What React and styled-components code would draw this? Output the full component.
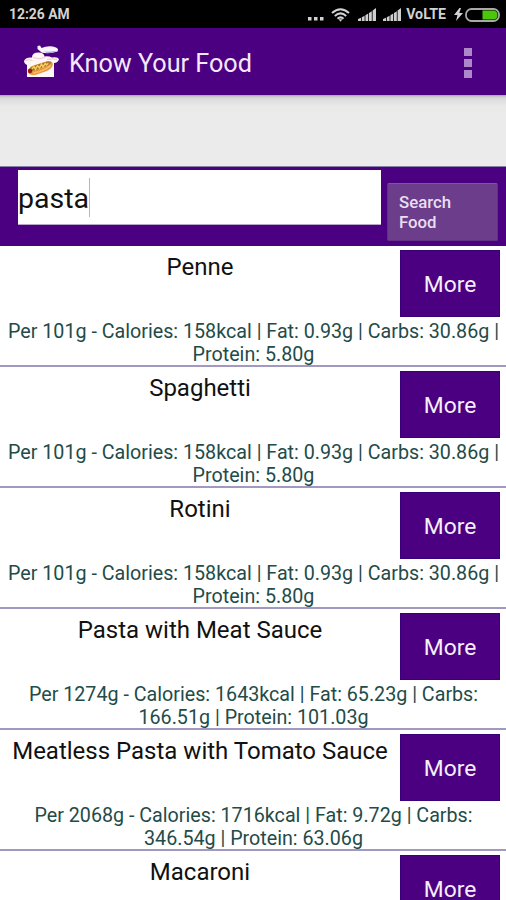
import styled, {createGlobalStyle} from "styled-components";

const GlobalStyle = createGlobalStyle`
	* {
		box-sizing: border-box;
	}

	body {
		margin: 0;
		background: #fff;
		font-family: Roboto, "Liberation Sans", sans-serif;
	}
`;

const Screen = styled.div`
	width: 506px;
	height: 900px;
	overflow: hidden;
	display: flex;
	flex-direction: column;
	background: #fff;
`;

const StatusBar = styled.div`
	flex: none;
	height: 28px;
	padding: 1px 6px 0 9px;
	display: flex;
	align-items: center;
	justify-content: space-between;
	background: #000;
	color: #d2d2d2;
`;

const StatusText = styled.span`
	margin-top: -1px;
	margin-left: ${({$gap = 0}) => $gap}px;
	font-size: ${({$size}) => $size}px;
	font-weight: 700;
	line-height: 16px;
	white-space: nowrap;
`;

const StatusIcons = styled.div`
	display: flex;
	align-items: center;
`;

const StatusIcon = styled.svg`
	display: block;
	flex: none;
	margin-left: ${({$gap = 0}) => $gap}px;
`;

const AppBar = styled.header`
	flex: none;
	height: 67px;
	padding: 0 34px 0 23px;
	display: flex;
	align-items: center;
	background: #4b0082;
`;

const AppTitle = styled.h1`
	margin: 4px auto 0 9px;
	font-size: 25.2px;
	font-weight: 400;
	line-height: 32px;
	color: #f3e9fa;
`;

const MenuButton = styled.button`
	padding: 2px 0 0;
	border: 0;
	background: none;
	display: grid;
	gap: 3px;
`;

const MenuDot = styled.span`
	width: 8px;
	height: 8px;
	background: #ad87ca;
`;

const Spacer = styled.div`
	flex: none;
	height: 72px;
	border-bottom: 1px solid #8a80a5;
	background: linear-gradient(#a9a2b0 0, #cfcfcf 2px, #dedede 5px, #e9e9e9 11px, #ebebeb 18px);
`;

const SearchBar = styled.form`
	flex: none;
	height: 79px;
	padding: 3px 8px 5px 18px;
	display: flex;
	justify-content: space-between;
	background: #4b0082;
`;

const SearchField = styled.div`
	width: 363px;
	height: 55px;
	padding-top: 3px;
	border-bottom: 1px solid #b9a6c9;
	display: flex;
	align-items: center;
	background: #fff;
	font-size: 28.5px;
	line-height: 34px;
	color: #111;
`;

const Caret = styled.span`
	width: 1px;
	height: 39px;
	margin-top: -3px;
	background: #b8b8b8;
`;

const SearchButton = styled.button`
	width: 111px;
	height: 58px;
	margin-top: 13px;
	padding: 0 11px;
	border: 1px solid #633184;
	border-top-color: #7f55a0;
	border-radius: 2px;
	background: #6b3d8b;
	color: #eadff1;
	font-family: inherit;
	font-size: 16.8px;
	font-weight: 500;
	line-height: 20px;
	text-align: left;
`;

const FoodList = styled.ul`
	margin: 0;
	padding: 0;
	list-style: none;
`;

const FoodItem = styled.li`
	height: 121px;
	padding-top: 4px;
	border-bottom: 2px solid #a199bf;
`;

const FoodHeader = styled.div`
	height: 67px;
	padding-right: 6px;
	display: flex;
`;

const FoodName = styled.div`
	flex: 1;
	padding-top: 3px;
	font-size: 24px;
	line-height: 28px;
	text-align: center;
	white-space: nowrap;
	color: #111;
`;

const MoreButton = styled.button`
	width: 100px;
	height: 67px;
	padding: 1px 0 0;
	border: 1px solid #3a0079;
	background: #4b0082;
	color: #f6effa;
	font-family: inherit;
	font-size: 22.8px;
`;

const FoodDetails = styled.div`
	padding: 3px 0 0 1px;
	font-size: 19.7px;
	line-height: 23px;
	text-align: center;
	white-space: pre-line;
	color: #234b48;
`;

const foods = [
	{name: "Penne", details: "Per 101g - Calories: 158kcal | Fat: 0.93g | Carbs: 30.86g |\nProtein: 5.80g"},
	{name: "Spaghetti", details: "Per 101g - Calories: 158kcal | Fat: 0.93g | Carbs: 30.86g |\nProtein: 5.80g"},
	{name: "Rotini", details: "Per 101g - Calories: 158kcal | Fat: 0.93g | Carbs: 30.86g |\nProtein: 5.80g"},
	{name: "Pasta with Meat Sauce", details: "Per 1274g - Calories: 1643kcal | Fat: 65.23g | Carbs:\n166.51g | Protein: 101.03g"},
	{name: "Meatless Pasta with Tomato Sauce", details: "Per 2068g - Calories: 1716kcal | Fat: 9.72g | Carbs:\n346.54g | Protein: 63.06g"},
	{name: "Macaroni", details: ""},
];

const Signal = ({gap}) => (
	<StatusIcon $gap={gap} width="18" height="13" viewBox="0 0 18 13" fill="#cfcfcf">
		<path d="M0 13v-2l3-1.300V13zM3.800 13V9.300L6.600 7.800V13zM7.400 13V7.300L10.200 5.600V13zM11 13V5L13.800 3.200V13zM14.600 13V2.500L18 0v13z" />
	</StatusIcon>
);

const Wifi = () => (
	<StatusIcon $gap={7} width="19" height="14" viewBox="0 0 19 14" fill="none" stroke="#d2d2d2" strokeWidth="2">
		<path d="M1 5Q9.5-2.6 18 5M3.8 8Q9.5 2.8 15.2 8M6.5 10.7Q9.5 8 12.5 10.7" />
		<path d="M7.6 11.3h3.8L9.5 13.7z" fill="#d2d2d2" stroke="none" />
	</StatusIcon>
);

const Battery = () => (
	<StatusIcon $gap={2} width="35" height="14" viewBox="0 0 35 14">
		<rect x="1" y="1" width="33" height="12" rx="5.5" fill="#000" stroke="#a9a9a9" strokeWidth="1.8" />
		<path d="M17.5 2.400H28q4.500 0 4.500 4.600t-4.500 4.600H17.5z" fill="#4bc60b" />
	</StatusIcon>
);

const FoodLogo = () => (
	<svg width="37" height="34" viewBox="0 0 37 34">
		<path d="M14.500 1l2.500-.500 1.500 2.500Q26 0 33 2.500q3 1.500 1.500 4-7 2.500-15.500 1.200L14.500 4z" fill="#f8f5fd" />
		<path d="M21 6.500q7 1 13-.700-3 2-7 2-4 0-6-1.300z" fill="#8c83c1" />
		<path d="M4 32V20q-3.500-2-2.800-4.500Q3 12 9 12.500 9 7.500 15.500 7.500q5.500 0 6 4 4-.800 7.500 1 6-.800 7 1.500-1 4-5 4V32z" fill="#fff7f6" />
		<path d="M2 15.500q4-1.500 7.500 0M10 12.500q6 2.500 12 0M24 14.500q5-1.500 10 0" fill="none" stroke="#f0c5cb" strokeWidth="1" />
		<path d="M5 26q0-3.500 7-6L24.500 16q5-.500 5.300 3 .2 4.200-6 7L13 29.700Q5 31 5 26z" fill="#e8943e" />
		<path d="M6 24.500q2-3 8-4.700l10-3q4-.500 4.200 1-1 2.200-6.500 3.900L10 25.800q-3.500 1-4-1.300z" fill="#a8742a" />
		<path d="M9 23.700l2-2 1.500 2.500 2-3.500 2 2.200 2-3.700 1.500 2.800 2.200-3.500 1.300 1.500 1.800-1.700" fill="none" stroke="#efd05d" strokeWidth="1.500" />
		<path d="M10 28q9-1 18-7.500" fill="none" stroke="#f7b765" strokeWidth="1.800" />
		<circle cx="7" cy="26" r="2.200" fill="#92200f" />
	</svg>
);

const App = () => {
	const items = foods.map(({name, details}) => (
		<FoodItem key={name}>
			<FoodHeader>
				<FoodName>{name}</FoodName>
				<MoreButton>More</MoreButton>
			</FoodHeader>
			<FoodDetails>{details}</FoodDetails>
		</FoodItem>
	));

	return (
		<>
			<GlobalStyle />
			<Screen>
				<StatusBar>
					<StatusText $size={13.9}>12:26 AM</StatusText>
					<StatusIcons>
						<StatusIcon width="16" height="12" viewBox="0 0 16 12" fill="#d2d2d2">
							<path d="M0 8h3.500v3.500H0zM6 8h3.500v3.500H6zM12 8h3.500v3.500H12z" />
						</StatusIcon>
						<Wifi />
						<Signal gap={8} />
						<Signal gap={7} />
						<StatusText $size={14.2} $gap={5}>VoLTE</StatusText>
						<StatusIcon $gap={8} width="9" height="13" viewBox="0 0 9 13" fill="#d2d2d2">
							<path d="M5.500 0L0 7h3.500L2 13 9 5H5.300L7 0z" />
						</StatusIcon>
						<Battery />
					</StatusIcons>
				</StatusBar>
				<AppBar>
					<FoodLogo />
					<AppTitle>Know Your Food</AppTitle>
					<MenuButton aria-label="Menu">
						<MenuDot />
						<MenuDot />
						<MenuDot />
					</MenuButton>
				</AppBar>
				<Spacer />
				<SearchBar>
					<SearchField>
						pasta
						<Caret />
					</SearchField>
					<SearchButton type="button">Search<br />Food</SearchButton>
				</SearchBar>
				<FoodList>{items}</FoodList>
			</Screen>
		</>
	);
};

export default App;
